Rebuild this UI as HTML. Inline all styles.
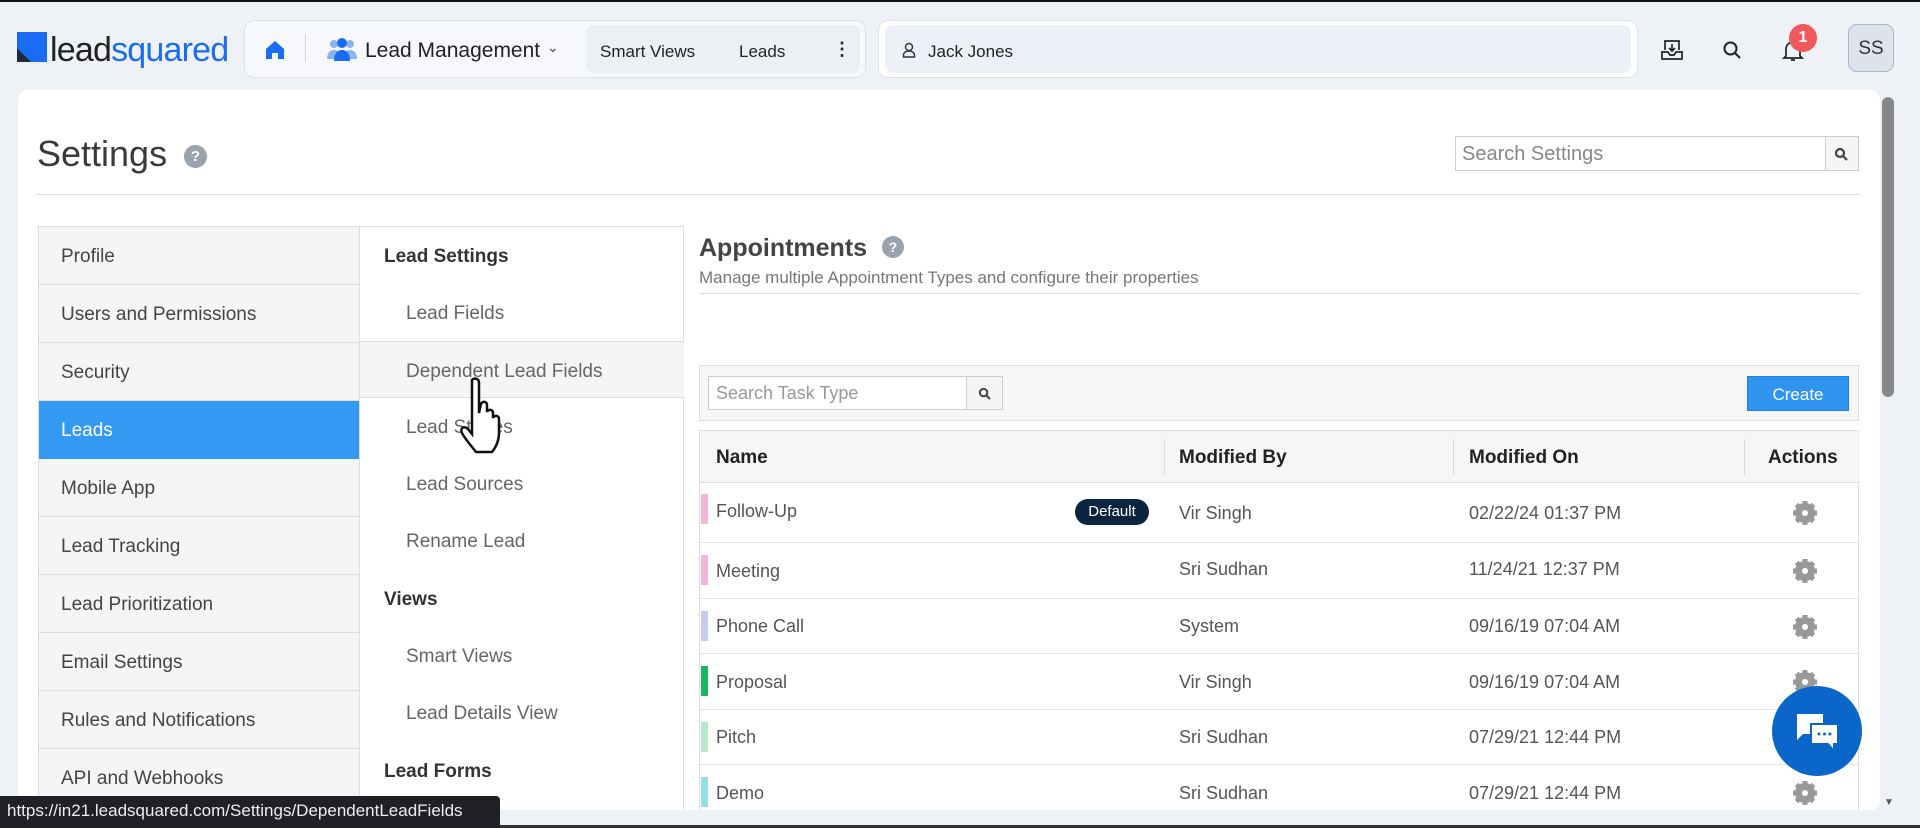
<!DOCTYPE html>
<html><head><meta charset="utf-8"><style>
*{box-sizing:border-box;margin:0;padding:0}
body{width:1920px;height:828px;overflow:hidden;background:#eef1f5;font-family:"Liberation Sans",sans-serif;position:relative;color:#333}
.a{position:absolute}
.topline{left:0;top:0;width:1920px;height:2px;background:#111}
.botline{left:0;top:825px;width:1920px;height:3px;background:#333}
.pill{background:#f5f7fa;border:1px solid #dde2ea;border-radius:10px}
.panel{left:18px;top:90px;width:1862px;height:720px;background:#fff;border-radius:10px}
.side div{position:absolute;left:0;width:321px;height:58px;border-bottom:1px solid #ddd;background:#f5f5f6;font-size:19px;color:#444;padding-left:22px;line-height:59px}
.mid div{position:absolute;left:0;width:324px;height:57px;font-size:19px;color:#666;padding-left:46px;line-height:59px}
.mid div.h{font-weight:bold;color:#333;padding-left:24px}
.row{position:absolute;left:0;width:1160px;border-bottom:1px solid #e3e3e3;font-size:18px;color:#555}
.row span{position:absolute;top:0}
.bar{position:absolute;left:1px;width:7px}
</style></head><body>
<div class="a topline"></div>
<!-- logo -->
<div class="a" style="left:17px;top:32px;width:30px;height:30px;background:#1a6cf4"></div>
<div class="a" style="left:17px;top:48px;width:0;height:0;border-left:14px solid #1b2a3a;border-top:14px solid transparent"></div>
<div class="a" style="left:50px;top:30px;font-size:34px;letter-spacing:-0.8px;line-height:40px"><span style="color:#222">lead</span><span style="color:#1a6cf4">squared</span></div>
<!-- nav pill -->
<div class="a pill" style="left:244px;top:20px;width:622px;height:58px;background:#f7f8fb"></div>
<svg class="a" style="left:264px;top:39px" width="22" height="22" viewBox="0 0 22 22"><path d="M11 2 L20 10 V20 H14 V14 H8 V20 H2 V10 Z" fill="#1a6cf4"/></svg>
<div class="a" style="left:305px;top:34px;width:1px;height:28px;background:#d0d5dd"></div>
<svg class="a" style="left:326px;top:37px" width="32" height="26" viewBox="0 0 32 26"><circle cx="8" cy="7" r="4" fill="#8bb3f0"/><circle cx="24" cy="7" r="4" fill="#8bb3f0"/><circle cx="16" cy="6" r="5" fill="#1a6cf4"/><path d="M1 22c0-6 3-9 7-9s5 2 5 2v7z" fill="#8bb3f0"/><path d="M31 22c0-6-3-9-7-9s-5 2-5 2v7z" fill="#8bb3f0"/><path d="M8 24c0-7 3-11 8-11s8 4 8 11z" fill="#1a6cf4"/></svg>
<div class="a" style="left:365px;top:39px;font-size:21px;color:#222">Lead Management</div>
<div class="a" style="left:547px;top:39px;font-size:14px;color:#444">&#8964;</div>
<div class="a" style="left:586px;top:25px;width:274px;height:48px;background:#eceff4;border-radius:8px"></div>
<div class="a" style="left:600px;top:42px;font-size:17px;color:#222">Smart Views</div>
<div class="a" style="left:739px;top:42px;font-size:17px;color:#222">Leads</div>
<div class="a" style="left:833px;top:39px;font-size:18px;color:#222;font-weight:bold">&#8942;</div>
<!-- search -->
<div class="a" style="left:878px;top:20px;width:760px;height:58px;background:#fff;border:1px solid #dde2ea;border-radius:10px"></div>
<div class="a" style="left:885px;top:25px;width:746px;height:48px;background:#eef0f8;border-radius:8px"></div>
<svg class="a" style="left:902px;top:42px" width="14" height="16" viewBox="0 0 14 16"><circle cx="7" cy="5" r="3.5" fill="none" stroke="#333" stroke-width="1.4"/><path d="M1.5 15v-2c0-2.5 2.5-4 5.5-4s5.5 1.5 5.5 4v2z" fill="none" stroke="#333" stroke-width="1.4"/></svg>
<div class="a" style="left:928px;top:42px;font-size:17px;color:#222">Jack Jones</div>
<!-- right icons -->
<svg class="a" style="left:1660px;top:38px" width="24" height="24" viewBox="0 0 24 24" fill="none" stroke="#222" stroke-width="1.7"><path d="M5 12V3h14v9M12 6v6M9 10l3 3 3-3M2 14h6l2 3h4l2-3h6v7H2z"/></svg>
<svg class="a" style="left:1722px;top:40px" width="20" height="20" viewBox="0 0 20 20" fill="none" stroke="#222" stroke-width="2"><circle cx="8.5" cy="8.5" r="6"/><path d="M13 13l5 5"/></svg>
<svg class="a" style="left:1782px;top:38px" width="22" height="24" viewBox="0 0 22 24" fill="none" stroke="#222" stroke-width="1.7"><path d="M4 18V11a7 7 0 0114 0v7l2 2H2zM9 22h4"/></svg>
<div class="a" style="left:1789px;top:24px;width:28px;height:28px;border-radius:50%;background:#f0585c;color:#fff;font-size:16px;font-weight:bold;text-align:center;line-height:28px">1</div>
<div class="a" style="left:1848px;top:24px;width:46px;height:48px;border-radius:9px;background:#dce3ec;border:1px solid #aab4c2;font-size:19px;text-align:center;line-height:48px;color:#333">SS</div>
<!-- panel -->
<div class="a panel"></div>
<div class="a" style="left:1882px;top:97px;width:12px;height:300px;background:#888;border-radius:6px"></div>
<div class="a" style="left:1884px;top:797px;font-size:10px;color:#555">&#9660;</div>
<div class="a" style="left:37px;top:133px;font-size:36px;color:#3a3a3a">Settings</div>
<div class="a" style="left:184px;top:145px;width:23px;height:23px;border-radius:50%;background:#99a2ad;color:#fff;font-size:15px;font-weight:bold;text-align:center;line-height:23px">?</div>
<div class="a" style="left:37px;top:194px;width:1822px;height:1px;background:#ddd"></div>
<div class="a" style="left:1455px;top:136px;width:404px;height:35px;border:1px solid #ccc;background:#fff"></div>
<div class="a" style="left:1462px;top:143px;font-size:20px;color:#888">Search Settings</div>
<div class="a" style="left:1825px;top:137px;width:33px;height:33px;background:#f5f5f5;border-left:1px solid #ccc"></div>
<svg class="a" style="left:1834px;top:147px" width="14" height="14" viewBox="0 0 14 14" fill="none" stroke="#444" stroke-width="2.2"><circle cx="6" cy="6" r="4"/><path d="M9 9l4 4"/></svg>
<!-- sidebar -->
<div class="a side" style="left:38px;top:226px;width:322px;height:584px;border:1px solid #ddd;border-bottom:none;background:#f5f5f6">
<div style="top:0">Profile</div><div style="top:58px">Users and Permissions</div><div style="top:116px">Security</div>
<div style="top:174px;background:#3399f3;color:#fff;border-color:#3399f3">Leads</div>
<div style="top:232px">Mobile App</div><div style="top:290px">Lead Tracking</div><div style="top:348px">Lead Prioritization</div><div style="top:406px">Email Settings</div><div style="top:464px">Rules and Notifications</div><div style="top:522px">API and Webhooks</div>
</div>
<div class="a mid" style="left:359px;top:226px;width:325px;height:584px;border:1px solid #ddd;border-bottom:none;background:#fff">
<div class="h" style="top:0">Lead Settings</div><div style="top:57px">Lead Fields</div>
<div style="top:114px;background:#f5f5f6;border-top:1px solid #ddd;border-bottom:1px solid #ddd">Dependent Lead Fields</div>
<div style="top:171px">Lead Stages</div><div style="top:228px">Lead Sources</div><div style="top:285px">Rename Lead</div>
<div class="h" style="top:343px">Views</div><div style="top:400px">Smart Views</div><div style="top:457px">Lead Details View</div><div class="h" style="top:515px">Lead Forms</div>
</div>
<!-- hand cursor -->
<svg class="a" style="left:458px;top:376px" width="56" height="80" viewBox="0 0 56 80"><path d="M14 4c3-3 7-1 7 3v30l2-9c1-3 6-3 6 1v7c1-3 6-3 6 1v5c1-3 6-3 6 1v14c0 8-3 14-7 19H18c-3-4-11-13-14-19-2-4 1-8 6-4l4 5V7z" fill="#fff" stroke="#111" stroke-width="2.5"/></svg>
<!-- appointments -->
<div class="a" style="left:699px;top:234px;font-size:25px;color:#444;font-weight:bold">Appointments</div>
<div class="a" style="left:882px;top:236px;width:22px;height:22px;border-radius:50%;background:#99a2ad;color:#fff;font-size:14px;font-weight:bold;text-align:center;line-height:22px">?</div>
<div class="a" style="left:699px;top:268px;font-size:17px;color:#777">Manage multiple Appointment Types and configure their properties</div>
<div class="a" style="left:699px;top:293px;width:1160px;height:1px;background:#ddd"></div>
<div class="a" style="left:699px;top:365px;width:1160px;height:56px;background:#f6f6f7;border:1px solid #ddd"></div>
<div class="a" style="left:708px;top:376px;width:259px;height:34px;background:#fff;border:1px solid #ccc"></div>
<div class="a" style="left:716px;top:383px;font-size:18px;color:#999">Search Task Type</div>
<div class="a" style="left:966px;top:376px;width:37px;height:34px;background:#f5f5f5;border:1px solid #ccc"></div>
<svg class="a" style="left:978px;top:387px" width="13" height="13" viewBox="0 0 14 14" fill="none" stroke="#444" stroke-width="2.2"><circle cx="6" cy="6" r="4"/><path d="M9 9l4 4"/></svg>
<div class="a" style="left:1747px;top:376px;width:102px;height:35px;background:#2f95f1;border:1px solid #1f7fe0;color:#fff;font-size:17px;text-align:center;line-height:35px">Create</div>
<!-- table -->
<div class="a" style="left:699px;top:430px;width:1160px;height:380px;border:1px solid #ddd;border-bottom:none;background:#fff">
<div class="row" style="top:0;height:52px;background:#f6f6f7;font-weight:bold;color:#222;font-size:19px;border-bottom:1px solid #ddd">
<span style="left:16px;top:16px">Name</span><span style="left:479px;top:16px">Modified By</span><span style="left:769px;top:16px">Modified On</span><span style="left:1068px;top:16px">Actions</span>
<i style="position:absolute;left:464px;top:8px;width:1px;height:36px;background:#ddd"></i><i style="position:absolute;left:753px;top:8px;width:1px;height:36px;background:#ddd"></i><i style="position:absolute;left:1044px;top:8px;width:1px;height:36px;background:#ddd"></i>
</div>
<div class="row" style="top:52px;height:60px"><i class="bar" style="top:11px;height:30px;background:#f4b6d8"></i><span style="left:16px;top:18px">Follow-Up</span><span style="left:375px;top:16px;width:74px;height:26px;border-radius:13px;background:#0b2540;color:#fff;font-size:15px;text-align:center;line-height:26px">Default</span><span style="left:479px;top:20px">Vir Singh</span><span style="left:769px;top:20px">02/22/24 01:37 PM</span></div>
<div class="row" style="top:112px;height:56px"><i class="bar" style="top:12px;height:30px;background:#f4b6d8"></i><span style="left:16px;top:18px">Meeting</span><span style="left:479px;top:16px">Sri Sudhan</span><span style="left:769px;top:16px">11/24/21 12:37 PM</span></div>
<div class="row" style="top:168px;height:55px"><i class="bar" style="top:12px;height:30px;background:#c5caf0"></i><span style="left:16px;top:17px">Phone Call</span><span style="left:479px;top:17px">System</span><span style="left:769px;top:17px">09/16/19 07:04 AM</span></div>
<div class="row" style="top:223px;height:56px"><i class="bar" style="top:12px;height:30px;background:#19b860"></i><span style="left:16px;top:18px">Proposal</span><span style="left:479px;top:18px">Vir Singh</span><span style="left:769px;top:18px">09/16/19 07:04 AM</span></div>
<div class="row" style="top:279px;height:55px"><i class="bar" style="top:12px;height:30px;background:#b8e8cb"></i><span style="left:16px;top:17px">Pitch</span><span style="left:479px;top:17px">Sri Sudhan</span><span style="left:769px;top:17px">07/29/21 12:44 PM</span></div>
<div class="row" style="top:334px;height:55px;border:none"><i class="bar" style="top:12px;height:30px;background:#96dfe8"></i><span style="left:16px;top:18px">Demo</span><span style="left:479px;top:18px">Sri Sudhan</span><span style="left:769px;top:18px">07/29/21 12:44 PM</span></div>
<svg style="position:absolute;left:0;top:0" width="1160" height="380">
<defs><g id="g"><circle r="7" fill="none" stroke="#999" stroke-width="6"/><g stroke="#999" stroke-width="5"><path d="M0-12V12M-12 0H12M-8.5-8.5L8.5 8.5M-8.5 8.5L8.5-8.5"/></g><circle r="3" fill="#fff"/></g></defs>
<use href="#g" x="1105" y="82"/><use href="#g" x="1105" y="140"/><use href="#g" x="1105" y="196"/><use href="#g" x="1105" y="251"/><use href="#g" x="1105" y="306"/><use href="#g" x="1105" y="362"/>
</svg>
</div>
<!-- chat -->
<div class="a" style="left:1772px;top:686px;width:90px;height:90px;border-radius:50%;background:#0a66c8"></div>
<svg class="a" style="left:1795px;top:710px" width="46" height="44" viewBox="0 0 46 44"><path d="M2 4h26v20H8l-6 6z" fill="#fff"/><path d="M16 14h27v20h-4v7l-6-7H16z" fill="#fff" stroke="#0a66c8" stroke-width="2"/><circle cx="24" cy="24" r="1.5" fill="#0a66c8"/><circle cx="29.5" cy="24" r="1.5" fill="#0a66c8"/><circle cx="35" cy="24" r="1.5" fill="#0a66c8"/></svg>
<!-- status -->
<div class="a" style="left:0;top:796px;width:500px;height:32px;background:#202124;color:#eee;font-size:17px;line-height:30px;padding-left:7px;border-top-right-radius:4px">https://in21.leadsquared.com/Settings/DependentLeadFields</div>
<div class="a botline" style="left:500px;width:1420px"></div>
</body></html>
